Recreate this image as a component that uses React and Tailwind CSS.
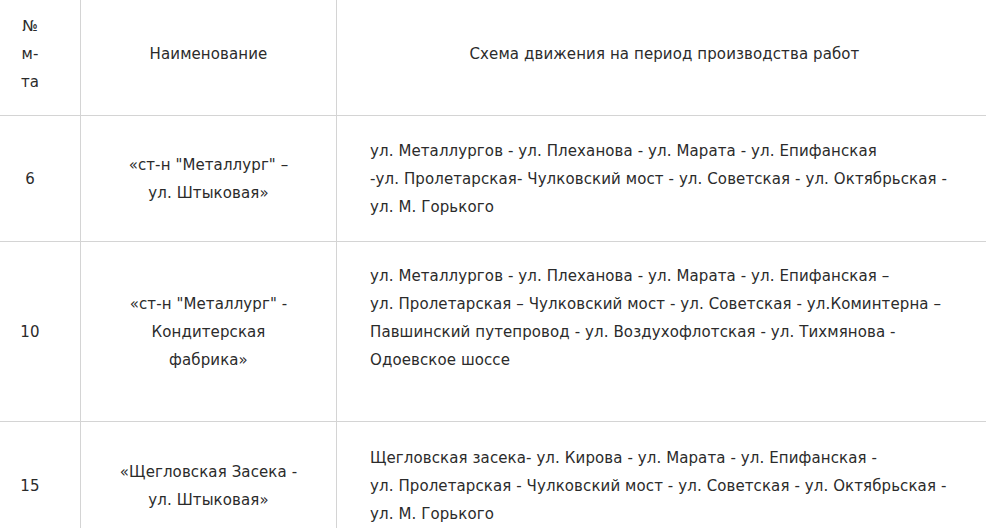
import React from 'react';

const rows = [
  {
    num: '6',
    name: ['«ст-н "Металлург" –', 'ул. Штыковая»'],
    route: [
      'ул. Металлургов - ул. Плеханова - ул. Марата - ул. Епифанская',
      '-ул. Пролетарская- Чулковский мост - ул. Советская - ул. Октябрьская -',
      'ул. М. Горького',
    ],
    height: 'h-[126px]',
    routePad: '',
  },
  {
    num: '10',
    name: ['«ст-н "Металлург" -', 'Кондитерская', 'фабрика»'],
    route: [
      'ул. Металлургов - ул. Плеханова - ул. Марата - ул. Епифанская –',
      'ул. Пролетарская – Чулковский мост - ул. Советская - ул.Коминтерна –',
      'Павшинский путепровод - ул. Воздухофлотская - ул. Тихмянова -',
      'Одоевское шоссе',
    ],
    height: 'h-[180px]',
    routePad: 'pb-[28px]',
  },
  {
    num: '15',
    name: ['«Щегловская Засека -', 'ул. Штыковая»'],
    route: [
      'Щегловская засека- ул. Кирова - ул. Марата - ул. Епифанская -',
      'ул. Пролетарская - Чулковский мост - ул. Советская - ул. Октябрьская -',
      'ул. М. Горького',
    ],
    height: 'h-[128px]',
    routePad: '',
  },
];

export default function App() {
  return (
    <div className="w-full h-[528px] overflow-hidden bg-white text-[#2b2b2b] font-['DejaVu_Sans',sans-serif] text-[15px] leading-[28px] tracking-[0.1px]">
      <div className="w-[992px]">
        {/* Header */}
        <div className="flex h-[116px] border-b border-[#d4d4d4]">
          <div className="w-[81px] shrink-0 border-r border-[#d4d4d4] flex flex-col items-center justify-center pr-[20px] pb-[7px] text-center">
            <span>№</span>
            <span>м-</span>
            <span>та</span>
          </div>
          <div className="w-[256px] shrink-0 border-r border-[#d4d4d4] flex items-center justify-center pb-[7px]">
            Наименование
          </div>
          <div className="flex-1 flex items-center justify-center pb-[7px]">
            Схема движения на период производства работ
          </div>
        </div>

        {rows.map((row) => (
          <div key={row.num} className={`flex ${row.height} border-b border-[#d4d4d4]`}>
            <div className="w-[81px] shrink-0 border-r border-[#d4d4d4] flex items-center justify-center pr-[20px]">
              {row.num}
            </div>
            <div className="w-[256px] shrink-0 border-r border-[#d4d4d4] flex flex-col items-center justify-center text-center">
              {row.name.map((line) => (
                <span key={line} className="whitespace-nowrap">{line}</span>
              ))}
            </div>
            <div className={`flex-1 flex flex-col justify-center pl-[33px] ${row.routePad}`}>
              {row.route.map((line) => (
                <span key={line} className="whitespace-nowrap">{line}</span>
              ))}
            </div>
          </div>
        ))}
      </div>
    </div>
  );
}
